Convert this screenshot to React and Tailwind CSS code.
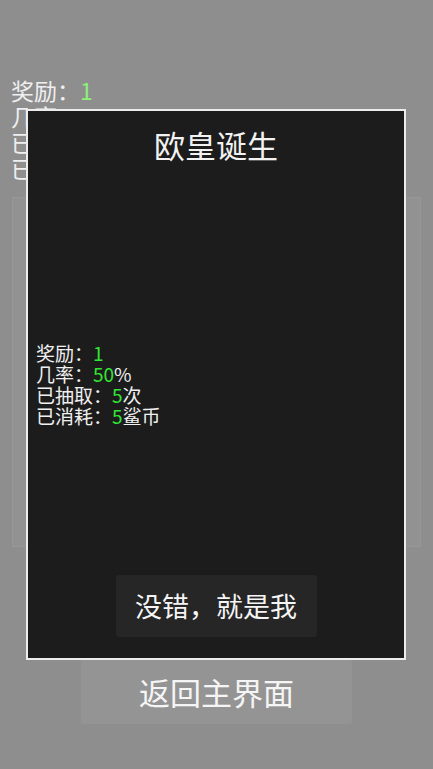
export default function App() {
  const font = { fontFamily: '"Noto Sans CJK SC", "Noto Sans", sans-serif' };
  return (
    <div className="relative w-[433px] h-[769px] overflow-hidden bg-[#8e8e8e]" style={font}>
      {/* background page */}
      <div className="flex flex-col px-[12px] pt-[77px]">
        <div className="ml-[-1px] flex flex-col text-[23px] leading-[26px] text-[#efefef]">
          <div>奖励：<span className="text-[#8cf07a]">1</span></div>
          <div>几率：<span className="text-[#8cf07a]">50</span>%</div>
          <div>已抽取：<span className="text-[#8cf07a]">5</span>次</div>
          <div>已消耗：<span className="text-[#8cf07a]">5</span>鲨币</div>
        </div>
        <div className="mt-[16px] h-[350px] border border-[#979797] bg-[#929292]"></div>
        <button className="mt-[113px] self-center w-[271px] h-[64px] rounded-[3px] bg-[#949494] text-[31px] text-[#f5f5f5] flex items-center justify-center">
          返回主界面
        </button>
      </div>

      {/* modal */}
      <div className="absolute left-[26px] top-[109px] w-[380px] h-[551px] border-2 border-[#ececec] bg-[#1c1c1c] flex flex-col">
        <div className="pt-[14px] text-center text-[31px] leading-[40px] text-[#f2f2f2]">欧皇诞生</div>
        <div className="mt-[177px] pl-[8px] flex flex-col text-[19px] leading-[21px] text-[#f0f0f0]">
          <div>奖励：<span className="text-[#33e533]">1</span></div>
          <div>几率：<span className="text-[#33e533]">50</span>%</div>
          <div>已抽取：<span className="text-[#33e533]">5</span>次</div>
          <div>已消耗：<span className="text-[#33e533]">5</span>鲨币</div>
        </div>
        <button className="mt-auto mb-[21px] self-center w-[201px] h-[62px] rounded-[3px] bg-[#262626] text-[27px] text-[#f5f5f5] flex items-center justify-center">
          没错，就是我
        </button>
      </div>
    </div>
  );
}
